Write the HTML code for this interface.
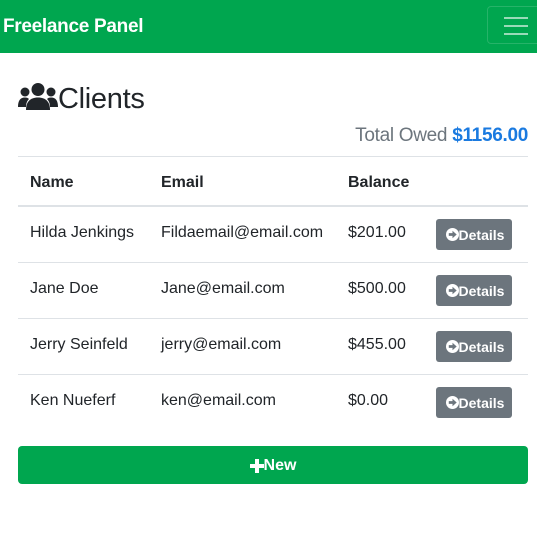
<!DOCTYPE html>
<html><head><style>
body{margin:0;font-family:"Liberation Sans",sans-serif;color:#212529;background:#fff;width:537px;height:537px;overflow:hidden;position:relative}
.nav{position:absolute;left:0;top:0;width:537px;height:53px;background:#00a64f}
.brand{position:absolute;left:3px;top:16px;color:#fff;font-size:19px;font-weight:bold;letter-spacing:-0.3px}
.tog{position:absolute;left:487px;top:6px;width:56px;height:38px;border:1px solid rgba(255,255,255,.15);border-radius:4px;box-sizing:border-box}
.tog i{position:absolute;left:16px;width:24px;height:2px;background:rgba(255,255,255,.6)}
h1{position:absolute;left:18px;top:82px;margin:0;font-size:29px;font-weight:normal;letter-spacing:-0.3px;line-height:34px}
.tot{position:absolute;right:9px;top:125px;font-size:19px;color:#6c757d;letter-spacing:-0.3px}
.tot b{color:#1a7ae0;font-weight:bold}
.hl{position:absolute;left:18px;width:510px;background:#dee2e6}
.t{position:absolute;font-size:16px}
.h{font-weight:bold}
.btn{position:absolute;left:436px;width:76px;height:31px;background:#6c757d;border-radius:3px;color:#fff;font-size:14px;font-weight:bold;display:flex;align-items:center;justify-content:center;box-sizing:border-box;padding-left:2px}
.new{position:absolute;left:18px;top:446px;width:510px;height:38px;background:#00a64f;border-radius:4px;color:#fff;font-weight:bold;font-size:16px;display:flex;align-items:center;justify-content:center;padding-top:2px;box-sizing:border-box}
</style></head><body>
<div class="nav"><div class="brand">Freelance Panel</div><div class="tog"><i style="top:10px"></i><i style="top:18px"></i><i style="top:26px"></i></div></div>
<h1><svg width="40" height="28" viewBox="0 0 40 28" style="vertical-align:-3px"><circle cx="20" cy="6.5" r="6.5" fill="#212529"/><circle cx="7" cy="9" r="4.5" fill="#212529"/><circle cx="33" cy="9" r="4.5" fill="#212529"/><path d="M8 27c0-8 4-12.5 12-12.5s12 4.5 12 12.5z" fill="#212529"/><path d="M0 24c0-6 2-9.5 7-9.5 2 0 3 .5 4 1.5-2 2-3 4.5-3 8z" fill="#212529"/><path d="M40 24c0-6-2-9.5-7-9.5-2 0-3 .5-4 1.5 2 2 3 4.5 3 8z" fill="#212529"/></svg>Clients</h1>
<div class="tot">Total Owed <b>$1156.00</b></div>
<div class="hl" style="top:156px;height:1px"></div>
<div class="t h" style="left:30px;top:174px">Name</div>
<div class="t h" style="left:161px;top:174px">Email</div>
<div class="t h" style="left:348px;top:174px">Balance</div>
<div class="hl" style="top:205px;height:2px"></div>
<div class="t" style="left:30px;top:224px">Hilda Jenkings</div><div class="t" style="left:161px;top:224px">Fildaemail@email.com</div><div class="t" style="left:348px;top:224px">$201.00</div>
<div class="hl" style="top:262px;height:1px"></div>
<div class="t" style="left:30px;top:280px">Jane Doe</div><div class="t" style="left:161px;top:280px">Jane@email.com</div><div class="t" style="left:348px;top:280px">$500.00</div>
<div class="hl" style="top:318px;height:1px"></div>
<div class="t" style="left:30px;top:336px">Jerry Seinfeld</div><div class="t" style="left:161px;top:336px">jerry@email.com</div><div class="t" style="left:348px;top:336px">$455.00</div>
<div class="hl" style="top:374px;height:1px"></div>
<div class="t" style="left:30px;top:392px">Ken Nueferf</div><div class="t" style="left:161px;top:392px">ken@email.com</div><div class="t" style="left:348px;top:392px">$0.00</div>
<div class="btn" style="top:219px"><svg width="13" height="13" viewBox="0 0 14 14"><circle cx="7" cy="7" r="7" fill="#fff"/><path d="M3 5.5h4V3l4.5 4L7 11V8.5H3z" fill="#6c757d"/></svg>Details</div>
<div class="btn" style="top:275px"><svg width="13" height="13" viewBox="0 0 14 14"><circle cx="7" cy="7" r="7" fill="#fff"/><path d="M3 5.5h4V3l4.5 4L7 11V8.5H3z" fill="#6c757d"/></svg>Details</div>
<div class="btn" style="top:331px"><svg width="13" height="13" viewBox="0 0 14 14"><circle cx="7" cy="7" r="7" fill="#fff"/><path d="M3 5.5h4V3l4.5 4L7 11V8.5H3z" fill="#6c757d"/></svg>Details</div>
<div class="btn" style="top:387px"><svg width="13" height="13" viewBox="0 0 14 14"><circle cx="7" cy="7" r="7" fill="#fff"/><path d="M3 5.5h4V3l4.5 4L7 11V8.5H3z" fill="#6c757d"/></svg>Details</div>
<div class="new"><svg width="14" height="14" viewBox="0 0 14 14"><path d="M5 0h4v5h5v4H9v5H5V9H0V5h5z" fill="#fff"/></svg>New</div>
</body></html>
